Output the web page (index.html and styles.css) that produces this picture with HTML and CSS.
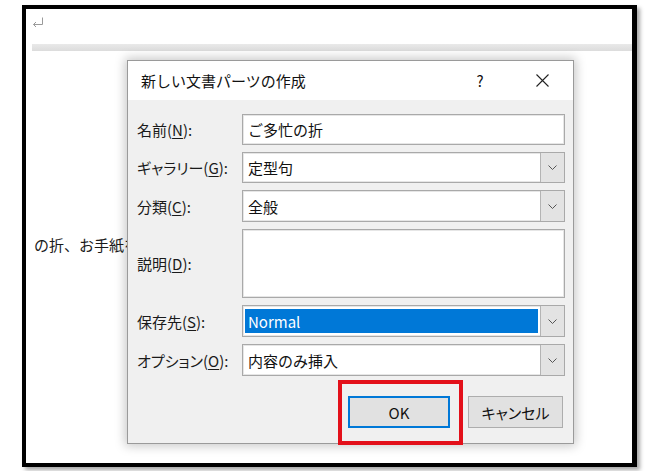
FILE: index.html
```html
<!DOCTYPE html>
<html lang="ja">
<head>
<meta charset="utf-8">
<title>新しい文書パーツの作成</title>
<link rel="stylesheet" href="styles.css">
</head>
<body>
<div class="frame">
  <div class="doc">
    <div class="para-mark">
      <svg width="12" height="11" viewBox="0 0 12 11"><path d="M10.5 0.5 V7.5 H1.5 M4 5 L1.5 7.5 L4 10" fill="none" stroke="#9a9a9a" stroke-width="1"/></svg>
    </div>
    <div class="band"></div>
    <div class="doc-line"><p class="doc-text">の折、お手紙をいただきまして</p></div>
  </div>

  <div class="dialog">
    <div class="titlebar">
      <span class="title">新しい文書パーツの作成</span>
      <span class="help">?</span>
      <span class="close">
        <svg width="13" height="13" viewBox="0 0 13 13"><path d="M0.5 0.5 L12.5 12.5 M12.5 0.5 L0.5 12.5" stroke="#222" stroke-width="1.1" fill="none"/></svg>
      </span>
    </div>
    <div class="body">
      <div class="form">
        <label class="lbl">名前(<u>N</u>):</label>
        <div class="field h31"><span class="val">ご多忙の折</span></div>

        <label class="lbl">ギャラリー(<u>G</u>):</label>
        <div class="field combo h31"><span class="val">定型句</span><span class="drop"><svg width="9" height="5" viewBox="0 0 9 5"><path d="M0.5 0.5 L4.5 4.5 L8.5 0.5" fill="none" stroke="#555" stroke-width="1"/></svg></span></div>

        <label class="lbl">分類(<u>C</u>):</label>
        <div class="field combo h32"><span class="val">全般</span><span class="drop"><svg width="9" height="5" viewBox="0 0 9 5"><path d="M0.5 0.5 L4.5 4.5 L8.5 0.5" fill="none" stroke="#555" stroke-width="1"/></svg></span></div>

        <label class="lbl">説明(<u>D</u>):</label>
        <div class="field area"></div>

        <label class="lbl">保存先(<u>S</u>):</label>
        <div class="field combo h32"><span class="val sel">Normal</span><span class="drop"><svg width="9" height="5" viewBox="0 0 9 5"><path d="M0.5 0.5 L4.5 4.5 L8.5 0.5" fill="none" stroke="#555" stroke-width="1"/></svg></span></div>

        <label class="lbl">オプション(<u>O</u>):</label>
        <div class="field combo h32"><span class="val">内容のみ挿入</span><span class="drop"><svg width="9" height="5" viewBox="0 0 9 5"><path d="M0.5 0.5 L4.5 4.5 L8.5 0.5" fill="none" stroke="#555" stroke-width="1"/></svg></span></div>
      </div>
      <div class="buttons">
        <button class="btn ok">OK</button>
        <button class="btn cancel">キャンセル</button>
      </div>
    </div>
    <div class="highlight"></div>
  </div>
</div>
</body>
</html>
```
FILE: styles.css
```css
html, body {
  margin: 0;
  padding: 0;
  background: #ffffff;
}
body {
  width: 652px;
  height: 471px;
  overflow: hidden;
  font-family: "Noto Sans CJK JP", "Noto Sans", sans-serif;
  color: #1a1a1a;
}
.frame {
  position: relative;
  box-sizing: border-box;
  margin: 5px 0 0 22px;
  width: 615px;
  height: 462px;
  border: 4px solid #000;
  border-right-width: 5px;
  background: #fff;
  box-shadow: 3px 3px 4px rgba(0,0,0,0.35);
}
.doc {
  padding-top: 8px;
}
.para-mark {
  height: 11px;
  padding-left: 6px;
  line-height: 0;
}
.band {
  margin: 16px 0 0 6px;
  height: 7px;
  background: linear-gradient(#e9e9e9, #dcdcdc);
}
.doc-line {
  margin: 184px 0 0 8px;
  width: 93px;
  overflow: hidden;
}
.doc-text {
  margin: 0;
  font-size: 15px;
  line-height: 20px;
  white-space: nowrap;
  color: #1a1a1a;
}
.dialog {
  position: absolute;
  left: 101px;
  top: 51px;
  width: 447px;
  box-sizing: border-box;
  border: 1px solid #9a9a9a;
  background: #fff;
  box-shadow: 0 0 10px 2px rgba(0,0,0,0.22);
}
.titlebar {
  display: flex;
  align-items: center;
  height: 39px;
  background: #fff;
}
.title {
  flex: 1;
  padding-left: 13px;
  font-size: 15px;
  color: #111;
}
.help {
  width: 30px;
  text-align: center;
  margin-right: 32px;
  font-size: 15px;
  color: #111;
}
.close {
  width: 30px;
  margin-right: 16px;
  display: flex;
  justify-content: center;
  align-items: center;
}
.body {
  background: #f0f0f0;
  padding: 14px 8px 15px 9px;
}
.form {
  display: grid;
  grid-template-columns: 105px 1fr;
  row-gap: 7px;
}
.lbl {
  display: flex;
  align-items: center;
  font-size: 15px;
  font-feature-settings: "palt" 1;
  color: #1a1a1a;
  white-space: nowrap;
}
.lbl u {
  text-decoration-thickness: 1px;
  text-underline-offset: 2px;
}
.field {
  box-sizing: border-box;
  display: flex;
  align-items: center;
  background: #fff;
  border: 1px solid #a9a9a9;
  box-shadow: inset 0 0 0 1px #e6e6e6;
  font-size: 15px;
  color: #111;
}
.h31 { height: 31px; }
.h32 { height: 32px; }
.area { height: 69px; }
.val {
  flex: 1;
  padding-left: 5px;
  white-space: nowrap;
}
.val.sel {
  margin: 3px 2px 3px 2px;
  padding-left: 3px;
  align-self: stretch;
  display: flex;
  align-items: center;
  background: #0078d7;
  color: #fff;
}
.drop {
  align-self: stretch;
  width: 23px;
  display: flex;
  align-items: center;
  justify-content: center;
  background: #e3e3e3;
  border-left: 1px solid #b4b4b4;
}
.buttons {
  display: flex;
  justify-content: flex-end;
  gap: 18px;
  margin-top: 20px;
  padding-right: 2px;
}
.btn {
  box-sizing: border-box;
  height: 32px;
  background: #e1e1e1;
  border: 1px solid #adadad;
  font-family: "Noto Sans CJK JP", "Noto Sans", sans-serif;
  font-size: 15px;
  color: #111;
  padding: 0;
}
.btn.ok {
  width: 102px;
  border: 2px solid #0078d7;
}
.btn.cancel {
  width: 95px;
  font-feature-settings: "palt" 1;
}
.highlight {
  position: absolute;
  left: 210px;
  top: 319px;
  width: 125px;
  height: 65px;
  box-sizing: border-box;
  border: 4px solid #e3101a;
}
```
